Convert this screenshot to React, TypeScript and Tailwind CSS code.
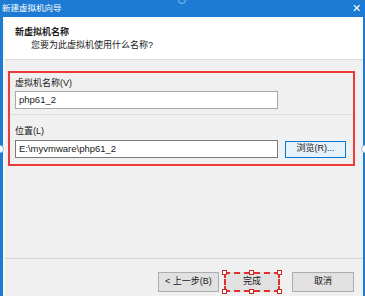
const font = { fontFamily: '"Liberation Sans", "Noto Sans CJK SC", sans-serif' };

function Handle({ className }: { className: string }) {
  return <div className={`absolute size-[5px] border border-[#c62828] bg-white ${className}`} />;
}

export default function App() {
  return (
    <div
      className="relative w-[365px] h-[296px] overflow-hidden bg-[#1d7bd3] flex flex-col text-[9px] text-[#1a1a1a]"
      style={font}
    >
      {/* title bar */}
      <div className="h-[17px] shrink-0 flex items-center justify-between pl-[2px] pr-[4px] text-white">
        <span className="text-[8.5px] leading-none">新建虚拟机向导</span>
        <span className="text-[11px] leading-none font-light">✕</span>
      </div>

      {/* client */}
      <div className="flex-1 flex flex-col ml-[3px] mr-[2px] bg-[#f0f0f0] border-l-[2px] border-[#f7f7f7]">
        <div className="h-[43px] shrink-0 bg-white border-b border-[#dadada] pl-[10px] pt-[9px]">
          <div className="font-bold leading-[13px]">新虚拟机名称</div>
          <div className="pl-[16px] leading-[13px]">您要为此虚拟机使用什么名称?</div>
        </div>

        <div className="mt-[11px] ml-[3px] mr-[8px] h-[95px] border-2 border-[#ea3a3a] flex flex-col px-[5px] pt-[4px]">
          <div className="leading-[13px]">虚拟机名称(V)</div>
          <div className="mt-[1px] w-[263px] h-[18px] bg-white border border-[#a9a9a9] flex items-center px-[3px] text-[9.5px]">
            php61_2
          </div>
          <div className="mt-[5px] -mx-[5px] h-px bg-[#dcdcdc]" />
          <div className="mt-[10px] leading-[13px]">位置(L)</div>
          <div className="mt-[2px] flex items-center gap-[7px]">
            <div className="w-[263px] h-[18px] bg-white border border-[#7a7a7a] flex items-center px-[3px] text-[9.5px]">
              E:\myvmware\php61_2
            </div>
            <div className="w-[61px] h-[17px] bg-[#e5f1fb] border border-[#0078d7] flex items-center justify-center">
              浏览(R)...
            </div>
          </div>
        </div>

        <div className="flex-1" />

        <div className="h-[38px] shrink-0 border-t border-[#d6d6d6] flex items-start justify-end pt-[13px] pr-[9px]">
          <div className="w-[61px] h-[20px] bg-[#e1e1e1] border border-[#adadad] flex items-center justify-center">
            &lt; 上一步(B)
          </div>
          <div className="relative ml-[5px] w-[56px] h-[20px] bg-[#e1e1e1] border-2 border-dashed border-[#e03030] flex items-center justify-center">
            完成
            <Handle className="-left-[4px] -top-[4px]" />
            <Handle className="left-[23px] -top-[4px]" />
            <Handle className="-right-[4px] -top-[4px]" />
            <Handle className="-left-[4px] -bottom-[4px]" />
            <Handle className="left-[23px] -bottom-[4px]" />
            <Handle className="-right-[4px] -bottom-[4px]" />
          </div>
          <div className="ml-[12px] w-[62px] h-[20px] bg-[#e1e1e1] border border-[#adadad] flex items-center justify-center">
            取消
          </div>
        </div>
      </div>

      {/* screenshot handles */}
      <div className="absolute left-[178px] -top-[4px] size-[8px] rounded-full border border-[#8fc2ee] bg-[#1d7bd3]" />
      <div className="absolute -left-[4px] top-[145px] size-[8px] rounded-full border border-[#8fc2ee] bg-white" />
      <div className="absolute -right-[4px] top-[145px] size-[8px] rounded-full border border-[#8fc2ee] bg-white" />
    </div>
  );
}
